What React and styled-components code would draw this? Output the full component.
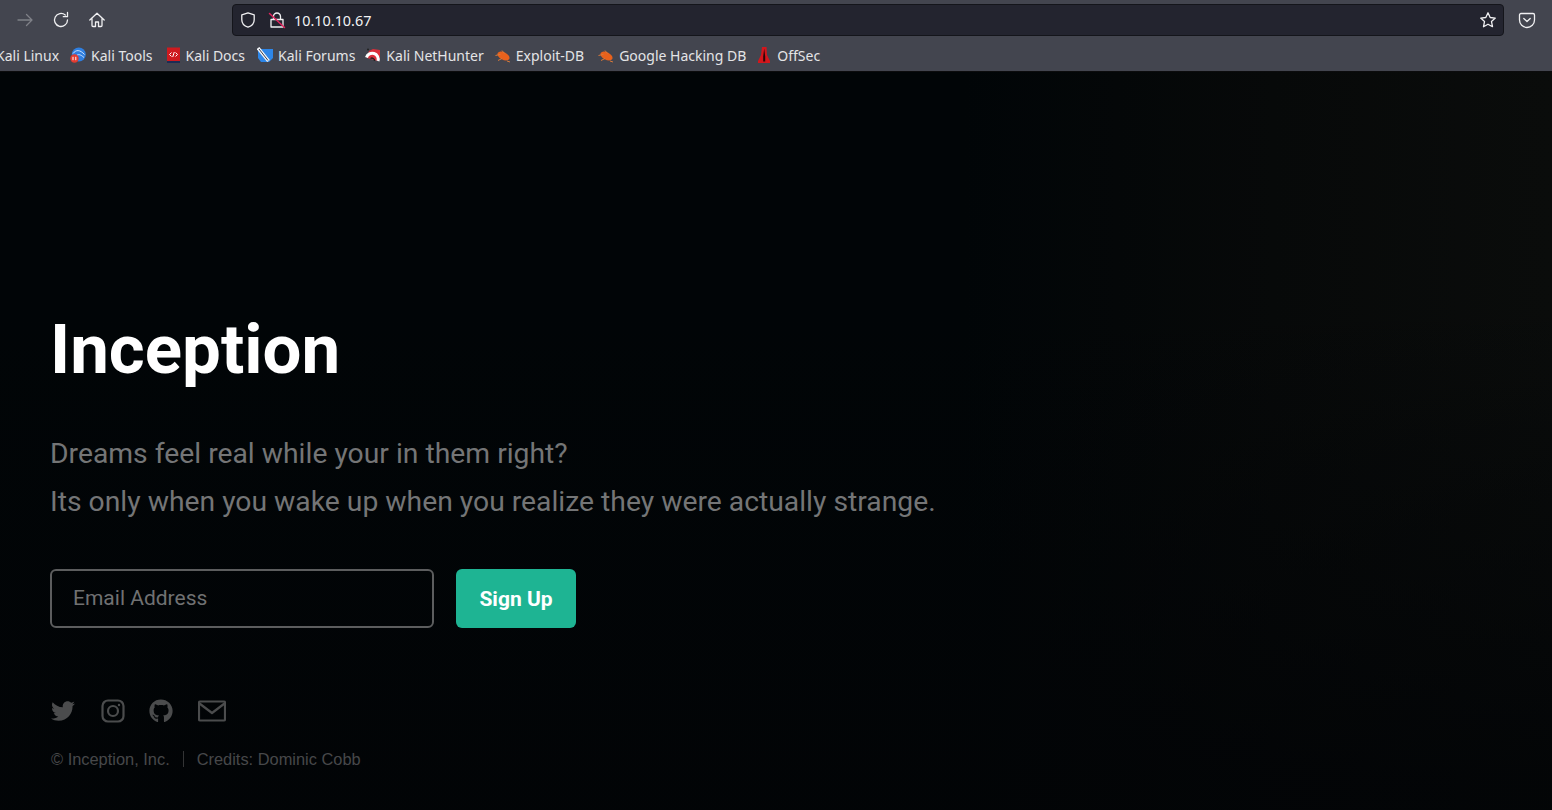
import React from "react";
import styled, { createGlobalStyle } from "styled-components";
import { FaTwitter, FaGithub } from "react-icons/fa";

const Global = createGlobalStyle`
  html, body { margin: 0; padding: 0; background: #010305; }
  * { box-sizing: border-box; }
`;

const Window = styled.div`
  width: 1552px;
  height: 810px;
  display: flex;
  flex-direction: column;
  overflow: hidden;
`;

const Chrome = styled.header`
  height: 72px;
  flex: none;
  background: #43454f;
  border-bottom: 1px solid #0c0c0d;
  font-family: "Noto Sans", sans-serif;
  color: #e6e6e8;
`;

const Toolbar = styled.div`
  height: 36px;
  display: flex;
  align-items: center;
  padding: 4px 12px 0 16px;
`;

const NavGroup = styled.div`
  display: flex;
  align-items: center;
  gap: 18px;
  width: 216px;
  flex: none;
`;

const NavIcon = styled.svg`
  width: 18px;
  height: 18px;
  flex: none;
  fill: none;
  stroke: ${p => (p.$dim ? "#7f8188" : "#f0f0f2")};
  stroke-width: 1.3;
  stroke-linecap: round;
  stroke-linejoin: round;
`;

const UrlBar = styled.div`
  width: 1272px;
  height: 32px;
  flex: none;
  display: flex;
  align-items: center;
  background: #23242f;
  border: 1px solid #14151b;
  border-radius: 4px;
  padding: 0 6px;
  font-size: 14.4px;
`;

const UrlIcons = styled.div`
  display: flex;
  align-items: center;
  gap: 11px;
  margin-right: 8px;
`;

const UrlText = styled.span`
  flex: 1;
  color: #f2f2f4;
`;

const PocketSlot = styled.div`
  margin-left: 14px;
  display: flex;
`;

const Bookmarks = styled.nav`
  height: 35px;
  display: flex;
  align-items: center;
  font-size: 14px;
  margin-left: -4px;
  padding-top: 3px;
`;

const Bookmark = styled.a`
  display: flex;
  align-items: center;
  gap: 5px;
  margin-right: ${p => 12 + (p.$nudge || 0)}px;
  white-space: nowrap;
  color: #e4e4e6;
`;

const Favicon = styled.svg`
  width: 16px;
  height: 16px;
  flex: none;
`;

const Page = styled.main`
  flex: 1;
  background:
    linear-gradient(180deg, rgba(2, 4, 6, 0) 30%, rgba(2, 4, 6, 0.85) 95%),
    linear-gradient(90deg, #010507 0%, #010507 62%, #070909 82%, #0a0c0b 100%);
  padding: 240px 0 0 50px;
  font-family: Roboto, sans-serif;
`;

const Title = styled.h1`
  margin: 0;
  font-size: 69px;
  line-height: 76px;
  font-weight: 700;
  color: #fff;
`;

const Lead = styled.p`
  margin: 42px 0 0;
  font-size: 28.3px;
  line-height: 48px;
  font-weight: 400;
  color: #747576;
`;

const Form = styled.form`
  display: flex;
  gap: 22px;
  margin-top: 43px;
`;

const Field = styled.div`
  width: 384px;
  height: 59px;
  border: 2px solid #5c5d5e;
  border-radius: 6px;
  padding: 0 21px 2px;
  display: flex;
  align-items: center;
  font-size: 21px;
  color: #707172;
`;

const Submit = styled.button`
  width: 120px;
  height: 59px;
  background: #1eb493;
  border: 0;
  border-radius: 6px;
  color: #fff;
  font: 700 21px Roboto, sans-serif;
  padding: 0;
`;

const Social = styled.div`
  display: grid;
  grid-template-columns: repeat(4, 49px);
  align-items: center;
  margin-top: 70px;
  padding-left: 1px;
  height: 24px;
  color: #4b4c4d;
  font-size: 24px;
  svg { display: block; }
`;

const LineIcon = styled.svg`
  flex: none;
  fill: none;
  stroke: currentColor;
  stroke-width: 2.2;
  stroke-linejoin: round;
`;

const Footer = styled.footer`
  display: flex;
  align-items: center;
  margin-top: 28px;
  padding-left: 1px;
  font-family: "Liberation Sans", Arial, sans-serif;
  font-size: 16.4px;
  line-height: 18px;
  color: #47484a;
`;

const Divider = styled.span`
  width: 1px;
  height: 16px;
  background: #333435;
  margin: 0 13px;
`;

const Icons = {
  back: <path d="M2 9h14M10.5 3.5L16 9l-5.5 5.5" />,
  reload: <path d="M15.5 9a6.5 6.5 0 1 1-2.2-4.9M15.5 1.5v4.2h-4.2" />,
  home: <path d="M1.8 9L9 2.2 16.2 9M4 7.5v7a1 1 0 0 0 1 1h2.5V11h3v4.5H13a1 1 0 0 0 1-1v-7" />,
  shield: <path d="M9 1.8l6.2 2v5c0 4-3 6.4-6.2 7.4-3.2-1-6.2-3.4-6.2-7.4v-5z" />,
  star: <path d="M9 1.8l2.2 4.7 5.1.6-3.8 3.5 1 5.1L9 13.2l-4.5 2.5 1-5.1-3.8-3.5 5.1-.6z" />,
  pocket: (
    <>
      <path d="M3 2.5h12a1.5 1.5 0 0 1 1.5 1.5v5a7.5 7.5 0 0 1-15 0V4A1.5 1.5 0 0 1 3 2.5z" />
      <path d="M5.8 7.5L9 10.5l3.2-3" />
    </>
  ),
};

const Lock = () => (
  <NavIcon viewBox="0 0 18 18">
    <path d="M5.5 8V5.5a3.5 3.5 0 0 1 7 0V8M3 8.5h12v7.5H3z" />
    <path d="M1.5 2.5L16.5 16.5" stroke="#e0245e" strokeWidth="1.5" />
  </NavIcon>
);

const Fav = {
  tools: (
    <>
      <circle cx="8.8" cy="7.5" r="7" fill="#2f7fe0" />
      <path d="M3 6.5c3-4 7-4 11.5 1M6 9c2-2 4-2 8 1.5" stroke="#cfe4ff" fill="none" />
      <circle cx="4.5" cy="11.5" r="4.2" fill="#e23b30" />
      <path d="M3 9.8v3.4M5.8 9.8v3.4" stroke="#fff" />
    </>
  ),
  docs: (
    <>
      <rect x="2" y="0.5" width="13" height="13.5" fill="#cf1a1f" />
      <rect x="2" y="14" width="13" height="2" fill="#1d2c55" />
      <path d="M6.5 5.5l-2 2 2 2M10.5 5.5l2 2-2 2M9.3 5l-1.6 5" stroke="#fff" fill="none" />
    </>
  ),
  forums: (
    <>
      <path d="M1 2h15v9l-4 4H4l-3-4z" fill="#2d86e8" />
      <path d="M1 1l10.5 13" stroke="#f2f4f8" strokeWidth="3.4" />
      <path d="M2 2l9 11.5" stroke="#3a3f4a" strokeWidth="1" />
    </>
  ),
  hunter: (
    <>
      <path d="M8 2l7 1v7l-2 4-11-3 2-7z" fill="#dc2f3a" />
      <path d="M1.5 10.5a6 6 0 0 1 11.5 3.5" stroke="#fff" strokeWidth="3" fill="none" />
      <path d="M5.5 11.5a2.6 2.6 0 0 1 4 2.5" stroke="#222" strokeWidth="1.4" fill="none" />
      <circle cx="3" cy="2.5" r="1" fill="#222" />
    </>
  ),
  exploit: (
    <>
      <ellipse cx="8.5" cy="9" rx="6.5" ry="3.8" transform="rotate(28 8.5 9)" fill="#e8611c" />
      <path d="M0.5 8.5l5-1.2M3 13.5l4-2M7 3.5l2.5 3M12 14l3 1" stroke="#d97a3a" fill="none" />
    </>
  ),
  offsec: (
    <>
      <path d="M6 0h4.5l.5 8 3 6v2H2v-2l3-6z" fill="#d3161c" />
      <path d="M8.2 1.5l1 8v5H7.2v-5z" fill="#2a0608" />
    </>
  ),
};

const marks = [
  ["Kali Tools", "tools", 0],
  ["Kali Docs", "docs", 0],
  ["Kali Forums", "forums", -2],
  ["Kali NetHunter", "hunter", -1],
  ["Exploit-DB", "exploit", 2],
  ["Google Hacking DB", "exploit", -2],
  ["OffSec", "offsec", 0],
];

export default function App() {
  return (
    <Window>
      <Global />
      <Chrome>
        <Toolbar>
          <NavGroup>
            <NavIcon viewBox="0 0 18 18" $dim>{Icons.back}</NavIcon>
            <NavIcon viewBox="0 0 18 18">{Icons.reload}</NavIcon>
            <NavIcon viewBox="0 0 18 18">{Icons.home}</NavIcon>
          </NavGroup>
          <UrlBar>
            <UrlIcons>
              <NavIcon viewBox="0 0 18 18">{Icons.shield}</NavIcon>
              <Lock />
            </UrlIcons>
            <UrlText>10.10.10.67</UrlText>
            <NavIcon viewBox="0 0 18 18">{Icons.star}</NavIcon>
          </UrlBar>
          <PocketSlot>
            <NavIcon viewBox="0 0 18 18">{Icons.pocket}</NavIcon>
          </PocketSlot>
        </Toolbar>
        <Bookmarks>
          <Bookmark $nudge={-1}>Kali Linux</Bookmark>
          {marks.map(([label, icon, nudge]) => (
            <Bookmark key={label} $nudge={nudge}>
              <Favicon viewBox="0 0 16 16">{Fav[icon]}</Favicon>
              {label}
            </Bookmark>
          ))}
        </Bookmarks>
      </Chrome>
      <Page>
        <Title>Inception</Title>
        <Lead>
          Dreams feel real while your in them right?
          <br />
          Its only when you wake up when you realize they were actually strange.
        </Lead>
        <Form>
          <Field>Email Address</Field>
          <Submit type="button">Sign Up</Submit>
        </Form>
        <Social>
          <FaTwitter />
          <LineIcon width="26" height="26" viewBox="0 0 26 26">
            <rect x="2.5" y="2.5" width="21" height="21" rx="5.5" />
            <circle cx="13" cy="13" r="5" />
            <circle cx="19" cy="7" r="1.2" fill="currentColor" stroke="none" />
          </LineIcon>
          <FaGithub />
          <LineIcon width="28" height="24" viewBox="0 0 28 24">
            <rect x="1" y="2.5" width="26" height="19" rx="1" />
            <path d="M1.5 4.5L14 14 26.5 4.5" />
          </LineIcon>
        </Social>
        <Footer>
          <span>© Inception, Inc.</span>
          <Divider />
          <span>Credits: Dominic Cobb</span>
        </Footer>
      </Page>
    </Window>
  );
}
